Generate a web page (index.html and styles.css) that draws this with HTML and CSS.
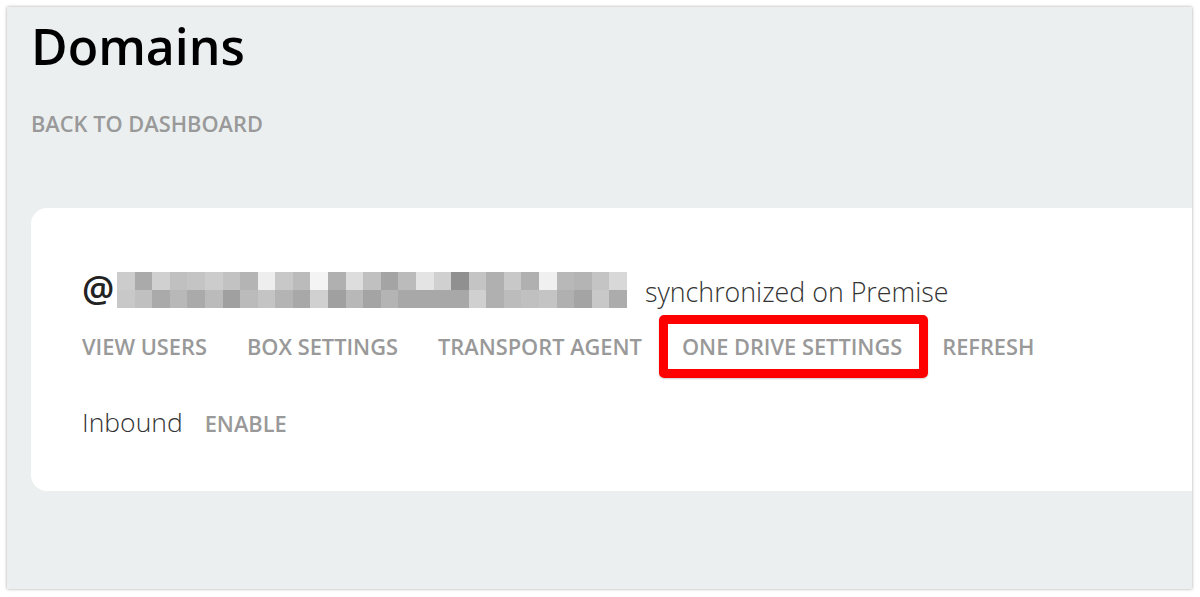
FILE: index.html
```html
<!DOCTYPE html>
<html lang="en">
<head>
    <meta charset="UTF-8">
    <meta name="viewport" content="width=device-width, initial-scale=1.0">
    <title>Domains</title>
    <link rel="stylesheet" href="styles.css">
</head>
<body>
    <div class="frame">
        <h1>Domains</h1>
        <a class="back-link" href="#">Back to dashboard</a>

        <div class="card">
            <div class="domain-row">
                <span class="at">@</span>
                <div class="blurred" id="blurred"></div>
                <span class="sync-status">synchronized on Premise</span>
            </div>
            <div class="actions">
                <a href="#">View users</a>
                <a href="#">Box settings</a>
                <a href="#">Transport agent</a>
                <a href="#" class="highlight">One drive settings</a>
                <a href="#">Refresh</a>
            </div>
            <div class="inbound-row">
                <span class="inbound-label">Inbound</span>
                <a href="#">Enable</a>
            </div>
        </div>
    </div>

    <script>
        // Pixelated (hidden) domain name, two rows of grey cells
        const shades = [
            ['ccc', 'aaa', 'd0d0d0', 'c0c0c0', 'c4c4c4', 'ccc', 'c2c2c2', 'b4b4b4', 'eee', 'c8c8c8',
             'bbb', 'f4f4f4', 'b0b0b0', 'ddd', 'c0c0c0', 'a4a4a4', 'bbb', 'e4e4e4', 'd0d0d0', '909090',
             'c4c4c4', 'b0b0b0', 'c8c8c8', 'b0b0b0', 'f0f0f0', 'b8b8b8', 'b4b4b4', 'c4c4c4', 'd8d8d8'],
            ['c8c8c8', 'c0c0c0', 'aaa', 'b8b8b8', 'aaa', 'bbb', 'a0a0a0', 'bbb', 'c4c4c4', 'b4b4b4',
             'a8a8a8', 'd0d0d0', 'a0a0a0', 'b8b8b8', 'a4a4a4', 'b4b4b4', 'a8a8a8', 'a8a8a8', 'a8a8a8', 'a8a8a8',
             'd0d0d0', 'b0b0b0', 'bcbcbc', 'c0c0c0', 'c4c4c4', 'b0b0b0', 'a4a4a4', 'c8c8c8', 'acacac']
        ];
        const blurred = document.getElementById('blurred');
        shades.forEach(row => {
            row.forEach(shade => {
                const cell = document.createElement('span');
                cell.style.background = '#' + shade;
                blurred.appendChild(cell);
            });
        });
    </script>
</body>
</html>
```

FILE: styles.css
```css
body {
    margin: 0;
    padding: 7px 8px 8px 7px;
    background-color: #ffffff;
    font-family: "Open Sans", "Noto Sans", sans-serif;
}
.frame {
    height: 582px;
    box-sizing: border-box;
    padding: 9px 0 0 24px;
    background-color: #ebeff0;
    box-shadow: 0 0 3px rgba(0, 0, 0, 0.35);
    overflow: hidden;
}
h1 {
    margin: 0;
    font-size: 50px;
    font-weight: 600;
    line-height: 60px;
    color: #000;
}
a {
    color: #999;
    font-size: 21.8px;
    font-weight: 600;
    text-transform: uppercase;
    text-decoration: none;
}
.back-link {
    display: inline-block;
    margin-top: 35px;
    line-height: 26px;
}
.card {
    margin: 71px -40px 0 0;
    height: 283px;
    box-sizing: border-box;
    padding: 62px 0 0 51px;
    background-color: #ffffff;
    border-radius: 16px 0 0 16px;
}
.domain-row {
    display: flex;
    align-items: flex-end;
}
.at {
    width: 35px;
    font-size: 36px;
    font-weight: 600;
    line-height: 38px;
    color: #222;
}
.blurred {
    display: grid;
    grid-template-columns: repeat(29, 1fr);
    grid-template-rows: 18px 18px;
    width: 510px;
}
.sync-status {
    margin: 0 0 1px 18px;
    font-size: 26.8px;
    font-weight: 300;
    line-height: 30px;
    color: #333;
}
.actions {
    display: flex;
    gap: 40px;
    margin-top: 26px;
}
.actions a {
    line-height: 26px;
}
.highlight {
    position: relative;
}
.highlight::after {
    content: "";
    position: absolute;
    left: -23px;
    right: -26px;
    top: -19px;
    bottom: -18px;
    border: 9px solid #ff0000;
    border-radius: 5px;
    box-shadow: 0 1px 2px rgba(0, 0, 0, 0.2);
}
.inbound-row {
    display: flex;
    align-items: baseline;
    gap: 22px;
    margin-top: 44px;
}
.inbound-label {
    font-size: 26.5px;
    font-weight: 300;
    color: #333;
}
```
